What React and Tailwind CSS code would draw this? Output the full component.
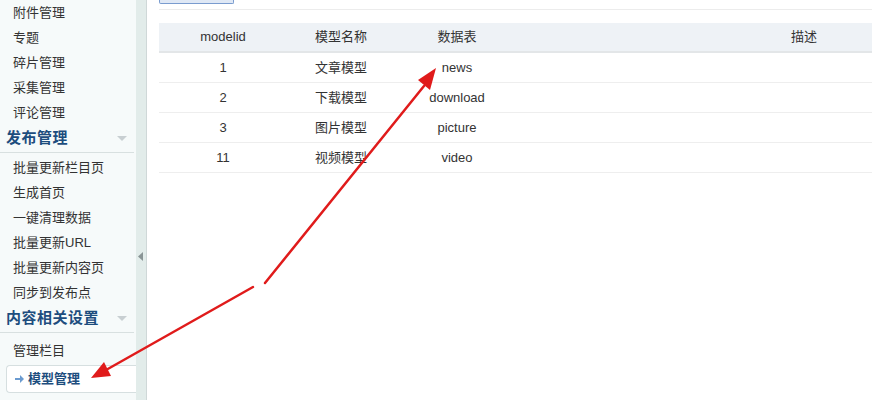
import React from "react";

const font = { fontFamily: '"Liberation Sans", "Noto Sans CJK SC", sans-serif' };

function Item({ children }) {
  return <div className="h-[25px] leading-[25px] pl-[13px] text-[13px] text-[#333] shrink-0">{children}</div>;
}

function Header({ children }) {
  return (
    <div className="h-[28px] shrink-0 flex items-center justify-between pl-[6px] pr-[6px] border-b border-[#d8e0e0] mr-[2px]">
      <span className="text-[15px] font-bold text-[#1d4d7e] tracking-[0.5px]">{children}</span>
      <svg width="12" height="8" viewBox="0 0 12 8"><path d="M1 1 L11 1 L6 6 Z" fill="#c8cfd2" /></svg>
    </div>
  );
}

const rows = [
  ["1", "文章模型", "news"],
  ["2", "下载模型", "download"],
  ["3", "图片模型", "picture"],
  ["11", "视频模型", "video"],
];

export default function App() {
  return (
    <div className="relative w-[872px] h-[400px] overflow-hidden bg-white flex" style={font}>
      {/* sidebar */}
      <div className="w-[136px] h-full bg-[#f6fafa] flex flex-col overflow-hidden">
        <Item>附件管理</Item>
        <Item>专题</Item>
        <Item>碎片管理</Item>
        <Item>采集管理</Item>
        <Item>评论管理</Item>
        <Header>发布管理</Header>
        <div className="h-[2px] shrink-0" />
        <Item>批量更新栏目页</Item>
        <Item>生成首页</Item>
        <Item>一键清理数据</Item>
        <Item>批量更新URL</Item>
        <Item>批量更新内容页</Item>
        <Item>同步到发布点</Item>
        <Header>内容相关设置</Header>
        <div className="h-[5px] shrink-0" />
        <Item>管理栏目</Item>
        <div className="shrink-0 ml-[6px] mt-[2px] h-[28px] bg-white border border-[#d6dfe0] rounded-l-[4px] border-r-0 flex items-center pl-[8px] gap-[4px]">
          <svg width="9" height="8" viewBox="0 0 9 8"><path d="M0 3 H5 V0 L9 4 L5 8 V5 H0 Z" fill="#6b9bd0" /></svg>
          <span className="text-[13px] font-bold text-[#1d4d7e]">模型管理</span>
        </div>
        <div className="h-[2px] shrink-0" />
        <Item>内容检查</Item>
      </div>
      {/* splitter */}
      <div className="w-[11px] h-full bg-[#e2ecea] border-r border-[#cfd8d8] flex items-center justify-center">
        <svg width="6" height="9" viewBox="0 0 6 9" className="mt-[112px]"><path d="M5 0 L0 4.5 L5 9 Z" fill="#8a9596" /></svg>
      </div>
      {/* main */}
      <div className="flex-1 h-full pl-[12px] overflow-hidden">
        <div className="h-[10px] border-b border-[#ececec] relative">
          <div className="w-[75px] h-[4px] border border-t-0 border-[#7a9ccf] bg-[#dfe8f5] rounded-b-[2px]" />
        </div>
        <div className="h-[13px]" />
        <div className="w-[930px] text-[13px] text-[#333]">
          <div className="flex h-[30px] items-center bg-[#eef2f6] border-b-2 border-[#e3e6e8]">
            <div className="w-[128px] text-center">modelid</div>
            <div className="w-[108px] text-center">模型名称</div>
            <div className="w-[124px] text-center">数据表</div>
            <div className="w-[570px] text-center">描述</div>
          </div>
          {rows.map((r) => (
            <div key={r[0]} className="flex h-[30px] items-center border-b border-[#eeeeee]">
              <div className="w-[128px] text-center">{r[0]}</div>
              <div className="w-[108px] text-center">{r[1]}</div>
              <div className="w-[124px] text-center">{r[2]}</div>
              <div className="w-[570px]" />
            </div>
          ))}
        </div>
      </div>
      {/* annotation arrows */}
      <svg className="absolute left-0 top-0 pointer-events-none" width="872" height="400" viewBox="0 0 872 400">
        <line x1="265" y1="283" x2="424" y2="86" stroke="#e01b1b" strokeWidth="2.5" strokeLinecap="round" />
        <path d="M436 68 L418 80 L430 90 Z" fill="#e01b1b" />
        <line x1="253" y1="287" x2="106" y2="370" stroke="#e01b1b" strokeWidth="2.5" strokeLinecap="round" />
        <path d="M91 378 L104 362 L111 376 Z" fill="#e01b1b" />
      </svg>
    </div>
  );
}
